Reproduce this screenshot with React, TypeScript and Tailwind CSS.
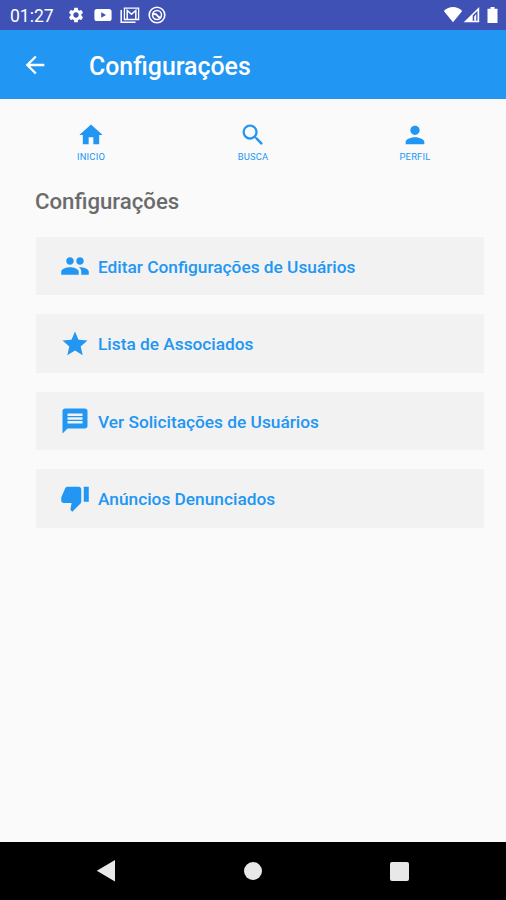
import {
  MdArrowBack,
  MdHome,
  MdMessage,
  MdPeople,
  MdPerson,
  MdSearch,
  MdSettings,
  MdStar,
  MdThumbDown,
} from "react-icons/md";

const tabs = [
  { label: "INICIO", icon: MdHome },
  { label: "BUSCA", icon: MdSearch },
  { label: "PERFIL", icon: MdPerson },
];

const options = [
  { label: "Editar Configurações de Usuários", icon: MdPeople },
  { label: "Lista de Associados", icon: MdStar },
  { label: "Ver Solicitações de Usuários", icon: MdMessage },
  { label: "Anúncios Denunciados", icon: MdThumbDown },
];

function StatusBar() {
  return (
    <div className="flex h-[30px] shrink-0 items-center bg-[#3f51b5] pr-2 pl-[10px] text-white">
      <span className="w-[57px] pt-[3px] text-[17.5px] leading-none">01:27</span>
      <MdSettings size={18} />
      {/* Video */}
      <svg className="ml-[9px]" width="18" height="18" viewBox="0 0 18 18" fill="currentColor">
        <path
          fillRule="evenodd"
          d="M3 3h12a2.6 2.6 0 0 1 2.6 2.6v6.8A2.6 2.6 0 0 1 15 15H3a2.6 2.6 0 0 1-2.6-2.6V5.6A2.6 2.6 0 0 1 3 3zM7.2 6.3v5.4L12 9z"
        />
      </svg>
      {/* Mail stack */}
      <svg className="ml-[8px]" width="20" height="18" viewBox="0 0 20 18" fill="none" stroke="currentColor">
        <path d="M1.2 4v12.3h14.3" strokeWidth="1.5" />
        <path d="M4.4 2.2h14.2v11.3H4.4z" strokeWidth="1.3" />
        <path d="M7.2 13V4.500l4.300 3.800 4.300-3.800V13" strokeWidth="1.500" />
      </svg>
      {/* App badge */}
      <svg className="ml-[8px]" width="18" height="18" viewBox="0 0 18 18" fill="none" stroke="currentColor">
        <circle cx="9" cy="9" r="7.8" strokeWidth="1.6" />
        <circle cx="9" cy="9" r="4.500" strokeWidth="1.500" />
        <path d="M5 8.500c2.500-1.500 3.500-.2 4.500 1.300s2 2 3.500 1.700" strokeWidth="1.900" />
      </svg>
      {/* Wifi, signal, battery */}
      <svg className="ml-auto" width="20" height="18" viewBox="0 0 20 18" fill="currentColor">
        <path d="M.8 5C6-.2 14-.2 19.2 5L10 16.3z" />
      </svg>
      <svg width="17" height="18" viewBox="0 0 17 18" fill="currentColor">
        <path fillRule="evenodd" d="M16.2 1v15.3H.7zM14.5 4.8 9.7 9.5v5.3h4.8z" />
        <path d="M11.2 10.5 13.2 8v6.8h-2z" />
      </svg>
      <svg className="ml-[7px]" width="11" height="18" viewBox="0 0 11 18" fill="currentColor">
        <path d="M3.5 1h4v1.8h3V17H.5V2.8h3z" />
      </svg>
    </div>
  );
}

function NavigationBar() {
  return (
    <div className="flex h-[58px] shrink-0 items-center justify-between bg-black pr-[97px] pl-[96px] text-[#e8e8e8]">
      <svg width="20" height="22" viewBox="0 0 20 22" fill="currentColor">
        <path d="M19 0v21.5L.8 10.8z" />
      </svg>
      <div className="size-[18px] rounded-full bg-[#e8e8e8]" />
      <div className="size-[19px] rounded-[2px] bg-[#e8e8e8]" />
    </div>
  );
}

export default function App() {
  return (
    <div className="flex h-[900px] w-[506px] flex-col overflow-hidden bg-[#fafafa] font-['Roboto',sans-serif]">
      <StatusBar />

      <header className="flex h-[69px] shrink-0 items-center bg-[#2196f3] pl-[21px] text-white">
        <MdArrowBack size={28} />
        <h1 className="ml-10 pt-[5px] text-[24.9px] leading-none font-medium">Configurações</h1>
      </header>

      <nav className="flex justify-between px-[10px] pt-[22px] text-[#2196f3]">
        {tabs.map(({ label, icon: Icon }) => (
          <button key={label} className="flex w-[162px] flex-col items-center">
            <Icon size={28} />
            <span className="mt-[3px] text-[9.4px] leading-[10px] tracking-[0.2px]">{label}</span>
          </button>
        ))}
      </nav>

      <main className="flex-1 pt-[26px] pr-[22px] pl-9">
        <h2 className="-ml-px text-[22.2px] leading-[26px] font-medium text-[#6b6b6b]">Configurações</h2>
        <div className="mt-[23px] flex flex-col gap-[19px]">
          {options.map(({ label, icon: Icon }) => (
            <button
              key={label}
              className="flex h-[58.4px] items-center gap-2 bg-[#f2f2f2] pl-6 text-[17.3px] font-medium text-[#2196f3]"
            >
              <Icon size={30} />
              <span className="pt-[3px]">{label}</span>
            </button>
          ))}
        </div>
      </main>

      <NavigationBar />
    </div>
  );
}
